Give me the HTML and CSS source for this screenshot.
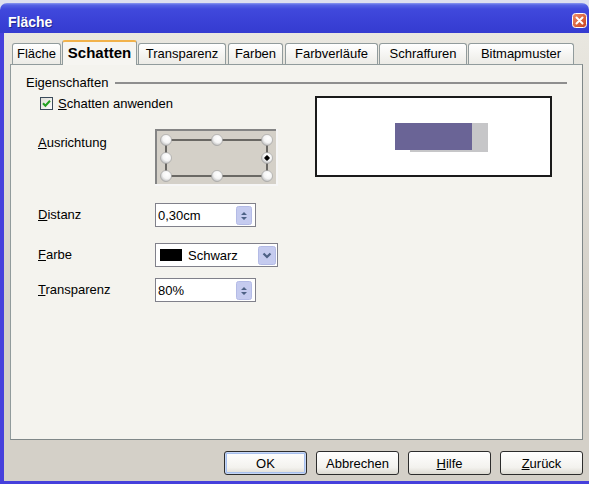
FILE: index.html
```html
<!DOCTYPE html>
<html lang="de">
<head>
<meta charset="utf-8">
<title>Fläche</title>
<link rel="stylesheet" href="styles.css">
</head>
<body>
<div class="window">
  <div class="titlebar">
    <span class="title">Fläche</span>
    <svg class="close" width="15" height="15" viewBox="0 0 15 15">
      <defs>
        <linearGradient id="cg" x1="0" y1="0" x2="1" y2="1">
          <stop offset="0" stop-color="#f0906a"/>
          <stop offset="1" stop-color="#c8401c"/>
        </linearGradient>
      </defs>
      <rect x="0.5" y="0.5" width="14" height="14" rx="3" fill="url(#cg)" stroke="#fff"/>
      <path d="M4.5 4.5 L10.5 10.5 M10.5 4.5 L4.5 10.5" stroke="#fff" stroke-width="2" stroke-linecap="round"/>
    </svg>
  </div>
  <div class="frame">
    <div class="tabs">
      <div class="tab t1">Fläche</div>
      <div class="tab t2 sel">Schatten</div>
      <div class="tab t3">Transparenz</div>
      <div class="tab t4">Farben</div>
      <div class="tab t5">Farbverläufe</div>
      <div class="tab t6">Schraffuren</div>
      <div class="tab t7">Bitmapmuster</div>
    </div>
    <div class="panel">
      <div class="group-head"><span>Eigenschaften</span><span class="rule"></span></div>
      <div class="panel-body">
        <div class="controls">
          <div class="check-row">
            <svg class="checkbox" width="13" height="13" viewBox="0 0 13 13">
              <defs>
                <linearGradient id="bg" x1="0" y1="0" x2="1" y2="1">
                  <stop offset="0" stop-color="#dcdcd4"/>
                  <stop offset="1" stop-color="#ffffff"/>
                </linearGradient>
              </defs>
              <rect x="0.5" y="0.5" width="12" height="12" fill="url(#bg)" stroke="#3a4a5a"/>
              <path d="M3 6.3 L5.4 8.8 L10 3.8" fill="none" stroke="#21a121" stroke-width="2"/>
            </svg>
            <span class="check-label"><u>S</u>chatten anwenden</span>
          </div>
          <div class="row row-align">
            <span class="lbl lbl-top"><u>A</u>usrichtung</span>
            <svg class="widget" width="123" height="57" viewBox="0 0 123 57">
              <defs>
                <radialGradient id="ball" cx="0.6" cy="0.35" r="0.7">
                  <stop offset="0" stop-color="#ffffff"/>
                  <stop offset="0.55" stop-color="#f4f4f4"/>
                  <stop offset="1" stop-color="#b8b8b8"/>
                </radialGradient>
              </defs>
              <rect width="123" height="57" fill="#d4d0c8"/>
              <rect x="0" y="0" width="123" height="2" fill="#848484"/>
              <rect x="0" y="0" width="2" height="57" fill="#848484"/>
              <rect x="0" y="55" width="123" height="2" fill="#f6f6f6"/>
              <rect x="121" y="0" width="2" height="57" fill="#f6f6f6"/>
              <path d="M11 11 H112 M11 47 H112 M11 11 V47 M112 11 V47" stroke="#000" stroke-width="1"/>
              <g fill="url(#ball)" stroke="#9a9a9a" stroke-width="0.6">
                <circle cx="11" cy="11" r="5.5"/>
                <circle cx="62" cy="11" r="5.5"/>
                <circle cx="112" cy="11" r="5.5"/>
                <circle cx="11" cy="29" r="5.5"/>
                <circle cx="112" cy="29" r="5.5"/>
                <circle cx="11" cy="47" r="5.5"/>
                <circle cx="62" cy="47" r="5.5"/>
                <circle cx="112" cy="47" r="5.5"/>
              </g>
              <circle cx="112" cy="29" r="2.2" fill="#000"/>
              <path d="M109 29 H115 M112 26 V32" stroke="#000" stroke-width="1"/>
            </svg>
          </div>
          <div class="row row-dist">
            <span class="lbl"><u>D</u>istanz</span>
            <div class="field">
              <span>0,30cm</span>
              <svg class="spin" width="16" height="19" viewBox="0 0 16 19">
                <rect x="0.5" y="0.5" width="15" height="18" rx="2" fill="#c5cbef" stroke="#b4bbe6"/>
                <path d="M5 9 L8 6 L11 9 Z M5 11 L8 14 L11 11 Z" fill="#4d6185"/>
              </svg>
            </div>
          </div>
          <div class="row row-color">
            <span class="lbl"><u>F</u>arbe</span>
            <div class="field combo">
              <span class="swatch"></span>
              <span class="combo-text">Schwarz</span>
              <svg class="drop" width="18" height="19" viewBox="0 0 18 19">
                <rect x="0.5" y="0.5" width="17" height="18" rx="2" fill="#c5cbef" stroke="#b4bbe6"/>
                <path d="M5.5 7.5 L9 11 L12.5 7.5" fill="none" stroke="#4d6185" stroke-width="2.2"/>
              </svg>
            </div>
          </div>
          <div class="row row-trans">
            <span class="lbl"><u>T</u>ransparenz</span>
            <div class="field">
              <span>80%</span>
              <svg class="spin" width="16" height="19" viewBox="0 0 16 19">
                <rect x="0.5" y="0.5" width="15" height="18" rx="2" fill="#c5cbef" stroke="#b4bbe6"/>
                <path d="M5 9 L8 6 L11 9 Z M5 11 L8 14 L11 11 Z" fill="#4d6185"/>
              </svg>
            </div>
          </div>
        </div>
        <div class="preview">
          <svg width="233" height="77" viewBox="0 0 233 77">
            <rect width="233" height="77" fill="#fff"/>
            <rect x="93" y="25" width="78" height="29" fill="#c6c6c8"/>
            <rect x="78" y="25" width="77" height="27" fill="#6a6496"/>
          </svg>
        </div>
      </div>
    </div>
    <div class="buttons">
      <button class="btn default">OK</button>
      <button class="btn">Abbrechen</button>
      <button class="btn"><u>H</u>ilfe</button>
      <button class="btn"><u>Z</u>urück</button>
    </div>
  </div>
</div>
</body>
</html>
```
FILE: styles.css
```css
html, body {
  margin: 0;
  padding: 0;
}
body {
  width: 589px;
  height: 484px;
  overflow: hidden;
  background: #dde0ef;
  font-family: "Liberation Sans", Arial, sans-serif;
  font-size: 13px;
  color: #000;
}
u {
  text-decoration: underline;
  text-underline-offset: 1px;
}
.window {
  margin-top: 3px;
  width: 589px;
}
.titlebar {
  height: 30px;
  display: flex;
  justify-content: space-between;
  align-items: flex-start;
  border-radius: 7px 7px 0 0;
  background: linear-gradient(#8a98f0 0, #5563e4 2px, #4049dc 6px, #3a41d6 60%, #353bd0 100%);
}
.title {
  margin: 11px 0 0 8px;
  font-weight: bold;
  font-size: 14px;
  line-height: 16px;
  color: #fff;
  text-shadow: 1px 1px 0 #20268e;
}
.close {
  display: block;
  margin: 10px 2px 0 0;
}
.frame {
  box-sizing: border-box;
  height: 451px;
  border-left: 4px solid #4640dc;
  border-bottom: 3px solid #4640dc;
  background: linear-gradient(#e9e7e0, #d4d0c8 60%);
  padding: 7px 6px 0 6px;
}
.tabs {
  display: flex;
  align-items: flex-end;
  height: 24px;
  padding-left: 2px;
}
.tab {
  box-sizing: border-box;
  height: 21px;
  border: 1px solid #919b9c;
  border-bottom: none;
  border-radius: 3px 3px 0 0;
  background: linear-gradient(#ffffff, #ecebe6);
  display: flex;
  align-items: center;
  justify-content: center;
  white-space: nowrap;
  line-height: 14px;
}
.t1 { width: 49px; margin-right: 1px; }
.t2 { width: 75px; margin-right: 1px; }
.t3 { width: 88px; margin-right: 2px; }
.t4 { width: 55px; margin-right: 2px; }
.t5 { width: 93px; margin-right: 1px; }
.t6 { width: 88px; margin-right: 1px; }
.t7 { width: 106px; }
.tab.sel {
  height: 25px;
  margin-bottom: -1px;
  position: relative;
  z-index: 1;
  border-top: 2px solid #f2b24a;
  background: #f6f5f1;
  font-weight: bold;
  font-size: 15px;
  padding-bottom: 1px;
}
.panel {
  box-sizing: border-box;
  width: 573px;
  height: 376px;
  border: 1px solid #919b9c;
  border-right-color: #7f8788;
  border-bottom-color: #7f8788;
  background: #f4f3ee;
  padding: 11px 15px 0 15px;
}
.group-head {
  display: flex;
  align-items: center;
  height: 14px;
  line-height: 14px;
}
.rule {
  flex: 1;
  height: 2px;
  margin-left: 7px;
  background: #8e8e8e;
}
.panel-body {
  display: flex;
  align-items: flex-start;
  margin-top: 6px;
  padding-left: 12px;
}
.controls {
  width: 240px;
  display: flex;
  flex-direction: column;
}
.check-row {
  display: flex;
  align-items: center;
  height: 13px;
  margin-top: 1px;
  margin-left: 2px;
}
.checkbox {
  display: block;
}
.check-label {
  margin-left: 5px;
  line-height: 13px;
}
.row {
  display: flex;
  align-items: center;
}
.lbl {
  width: 117px;
  flex: none;
  line-height: 16px;
}
.lbl-top {
  align-self: flex-start;
  padding-top: 6px;
}
.row-align { margin-top: 19px; }
.row-dist { margin-top: 17px; }
.row-color { margin-top: 16px; }
.row-trans { margin-top: 11px; }
.widget {
  display: block;
}
.field {
  box-sizing: border-box;
  width: 101px;
  height: 24px;
  border: 1px solid #80808a;
  background: #fff;
  display: flex;
  align-items: center;
  padding-left: 2px;
}
.spin {
  display: block;
  margin-left: auto;
  margin-right: 3px;
}
.combo {
  width: 123px;
}
.swatch {
  width: 22px;
  height: 12px;
  margin-left: 2px;
  background: #000;
  flex: none;
}
.combo-text {
  margin-left: 6px;
}
.drop {
  display: block;
  margin-left: auto;
  margin-right: 1px;
}
.preview {
  margin-left: 37px;
  width: 237px;
  height: 81px;
  box-sizing: border-box;
  border: 2px solid #1a1a1a;
}
.preview svg {
  display: block;
}
.buttons {
  display: flex;
  justify-content: flex-end;
  gap: 9px;
  margin-top: 11px;
}
.btn {
  box-sizing: border-box;
  width: 83px;
  height: 24px;
  border: 1px solid #2c2c2c;
  border-radius: 3px;
  background: linear-gradient(#ffffff, #f3f2ee 70%, #dcdad2);
  font-family: "Liberation Sans", Arial, sans-serif;
  font-size: 13px;
  color: #000;
  padding: 0;
}
.btn.default {
  box-shadow: inset 0 0 0 1px #c6d6f4, inset 0 0 0 2px #a6bfee;
}
```
